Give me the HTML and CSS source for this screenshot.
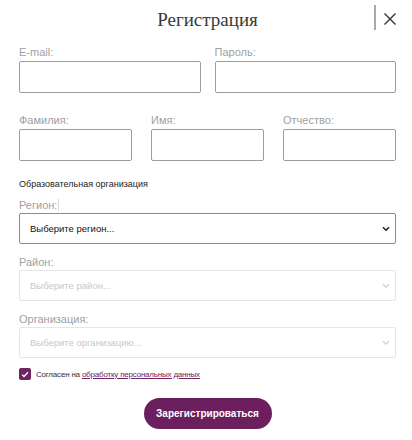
FILE: index.html
```html
<!DOCTYPE html>
<html lang="ru">
  <head>
    <meta charset="UTF-8" />
    <meta name="viewport" content="width=device-width, initial-scale=1.0" />
    <title>Регистрация</title>
    <link rel="stylesheet" href="styles.css">
  </head>
  <body>
    <div class="modal">
      <div class="modal-header">
        <h1>Регистрация</h1>
        <span class="divider"></span>
        <button class="close" type="button" aria-label="Закрыть">
          <svg width="14" height="14" viewBox="0 0 14 14">
            <path d="M1.5 1.5 L12.5 12.5 M12.5 1.5 L1.5 12.5" stroke="#333" stroke-width="1.4" fill="none" />
          </svg>
        </button>
      </div>

      <form id="regForm">
        <div class="row row-two">
          <div class="field">
            <label for="email">E-mail:</label>
            <input type="text" id="email" name="email" />
          </div>
          <div class="field">
            <label for="password">Пароль:</label>
            <input type="password" id="password" name="password" />
          </div>
        </div>

        <div class="row row-three">
          <div class="field">
            <label for="lastName">Фамилия:</label>
            <input type="text" id="lastName" name="lastName" />
          </div>
          <div class="field">
            <label for="firstName">Имя:</label>
            <input type="text" id="firstName" name="firstName" />
          </div>
          <div class="field">
            <label for="middleName">Отчество:</label>
            <input type="text" id="middleName" name="middleName" />
          </div>
        </div>

        <div class="section-title">Образовательная организация</div>

        <div class="field select-field">
          <label for="region">Регион:<span class="caret"></span></label>
          <div class="select">
            <span>Выберите регион...</span>
            <svg width="8" height="6" viewBox="0 0 8 6"><path d="M1 1.2 L4 4.2 L7 1.2" stroke="#222" stroke-width="1.6" fill="none" /></svg>
          </div>
        </div>

        <div class="field select-field">
          <label for="district">Район:</label>
          <div class="select disabled">
            <span>Выберите район...</span>
            <svg width="8" height="6" viewBox="0 0 8 6"><path d="M1 1.2 L4 4.2 L7 1.2" stroke="#ccc" stroke-width="1.2" fill="none" /></svg>
          </div>
        </div>

        <div class="field select-field">
          <label for="org">Организация:</label>
          <div class="select disabled">
            <span>Выберите организацию...</span>
            <svg width="8" height="6" viewBox="0 0 8 6"><path d="M1 1.2 L4 4.2 L7 1.2" stroke="#ccc" stroke-width="1.2" fill="none" /></svg>
          </div>
        </div>

        <div class="agree">
          <span class="checkbox">
            <svg width="8" height="7" viewBox="0 0 8 7"><path d="M1 3.6 L3 5.5 L7 1.2" stroke="#fff" stroke-width="1.3" fill="none" /></svg>
          </span>
          <span>Согласен на <a href="#">обработку персональных данных</a></span>
        </div>

        <button type="submit" class="submit">Зарегистрироваться</button>
      </form>
    </div>
  </body>
</html>
```

FILE: styles.css
```css
body {
  margin: 0;
  background: #fff;
  font-family: "Liberation Sans", Arial, sans-serif;
}

.modal {
  width: 412px;
  height: 440px;
  padding: 0 16px 0 19px;
  box-sizing: border-box;
  overflow: hidden;
}

.modal-header {
  position: relative;
  height: 40px;
}

h1 {
  margin: 0;
  padding-top: 9px;
  text-align: center;
  font-family: "Liberation Serif", "Times New Roman", serif;
  font-weight: normal;
  font-size: 19px;
  color: #3a3a3a;
}

.divider {
  position: absolute;
  left: 355px;
  top: 5px;
  width: 2px;
  height: 25px;
  background: #aaa;
}

.close {
  position: absolute;
  left: 364px;
  top: 12px;
  padding: 0;
  border: none;
  background: none;
  cursor: pointer;
}

.row {
  display: flex;
}

.row-two {
  gap: 14px;
  margin-top: 6px;
}

.row-two .field {
  flex: 1;
}

.row-three {
  gap: 19px;
  margin-top: 21px;
}

.row-three .field {
  width: 113px;
}

label {
  display: block;
  font-size: 11px;
  color: #a0a0a0;
  height: 14px;
  margin-bottom: 1px;
}

input[type="text"],
input[type="password"] {
  display: block;
  width: 100%;
  height: 32px;
  box-sizing: border-box;
  border: 1px solid #9c9c9c;
  border-radius: 2px;
  margin: 0;
}

.section-title {
  margin-top: 18px;
  font-size: 9px;
  color: #222;
  height: 12px;
}

.select-field {
  margin-top: 8px;
}

.select-field + .select-field {
  margin-top: 12px;
}

.select-field label {
  margin-bottom: 0;
}

.caret {
  display: inline-block;
  width: 1px;
  height: 12px;
  margin-left: 1px;
  vertical-align: -2px;
  background: #d8d8d8;
}

.select {
  display: flex;
  align-items: center;
  justify-content: space-between;
  height: 31px;
  box-sizing: border-box;
  padding: 0 5px 0 10px;
  border: 1px solid #8a8a8a;
  border-radius: 2px;
  font-size: 9.5px;
  color: #111;
}

.select.disabled {
  border-color: #e6e6e6;
  color: #c8c8c8;
}

.agree {
  display: flex;
  align-items: center;
  gap: 5px;
  margin-top: 10px;
  font-size: 8px;
  letter-spacing: -0.2px;
  color: #333;
}

.checkbox {
  display: flex;
  align-items: center;
  justify-content: center;
  width: 12px;
  height: 12px;
  border-radius: 2px;
  background: #6e2363;
}

.agree a {
  color: #6e2363;
}

.submit {
  display: block;
  margin: 18px auto 0;
  width: 128px;
  height: 31px;
  padding: 0;
  border: none;
  border-radius: 16px;
  background: #6b1f5f;
  color: #fff;
  font-family: "Liberation Sans", Arial, sans-serif;
  font-weight: bold;
  font-size: 10px;
  cursor: pointer;
}
```
